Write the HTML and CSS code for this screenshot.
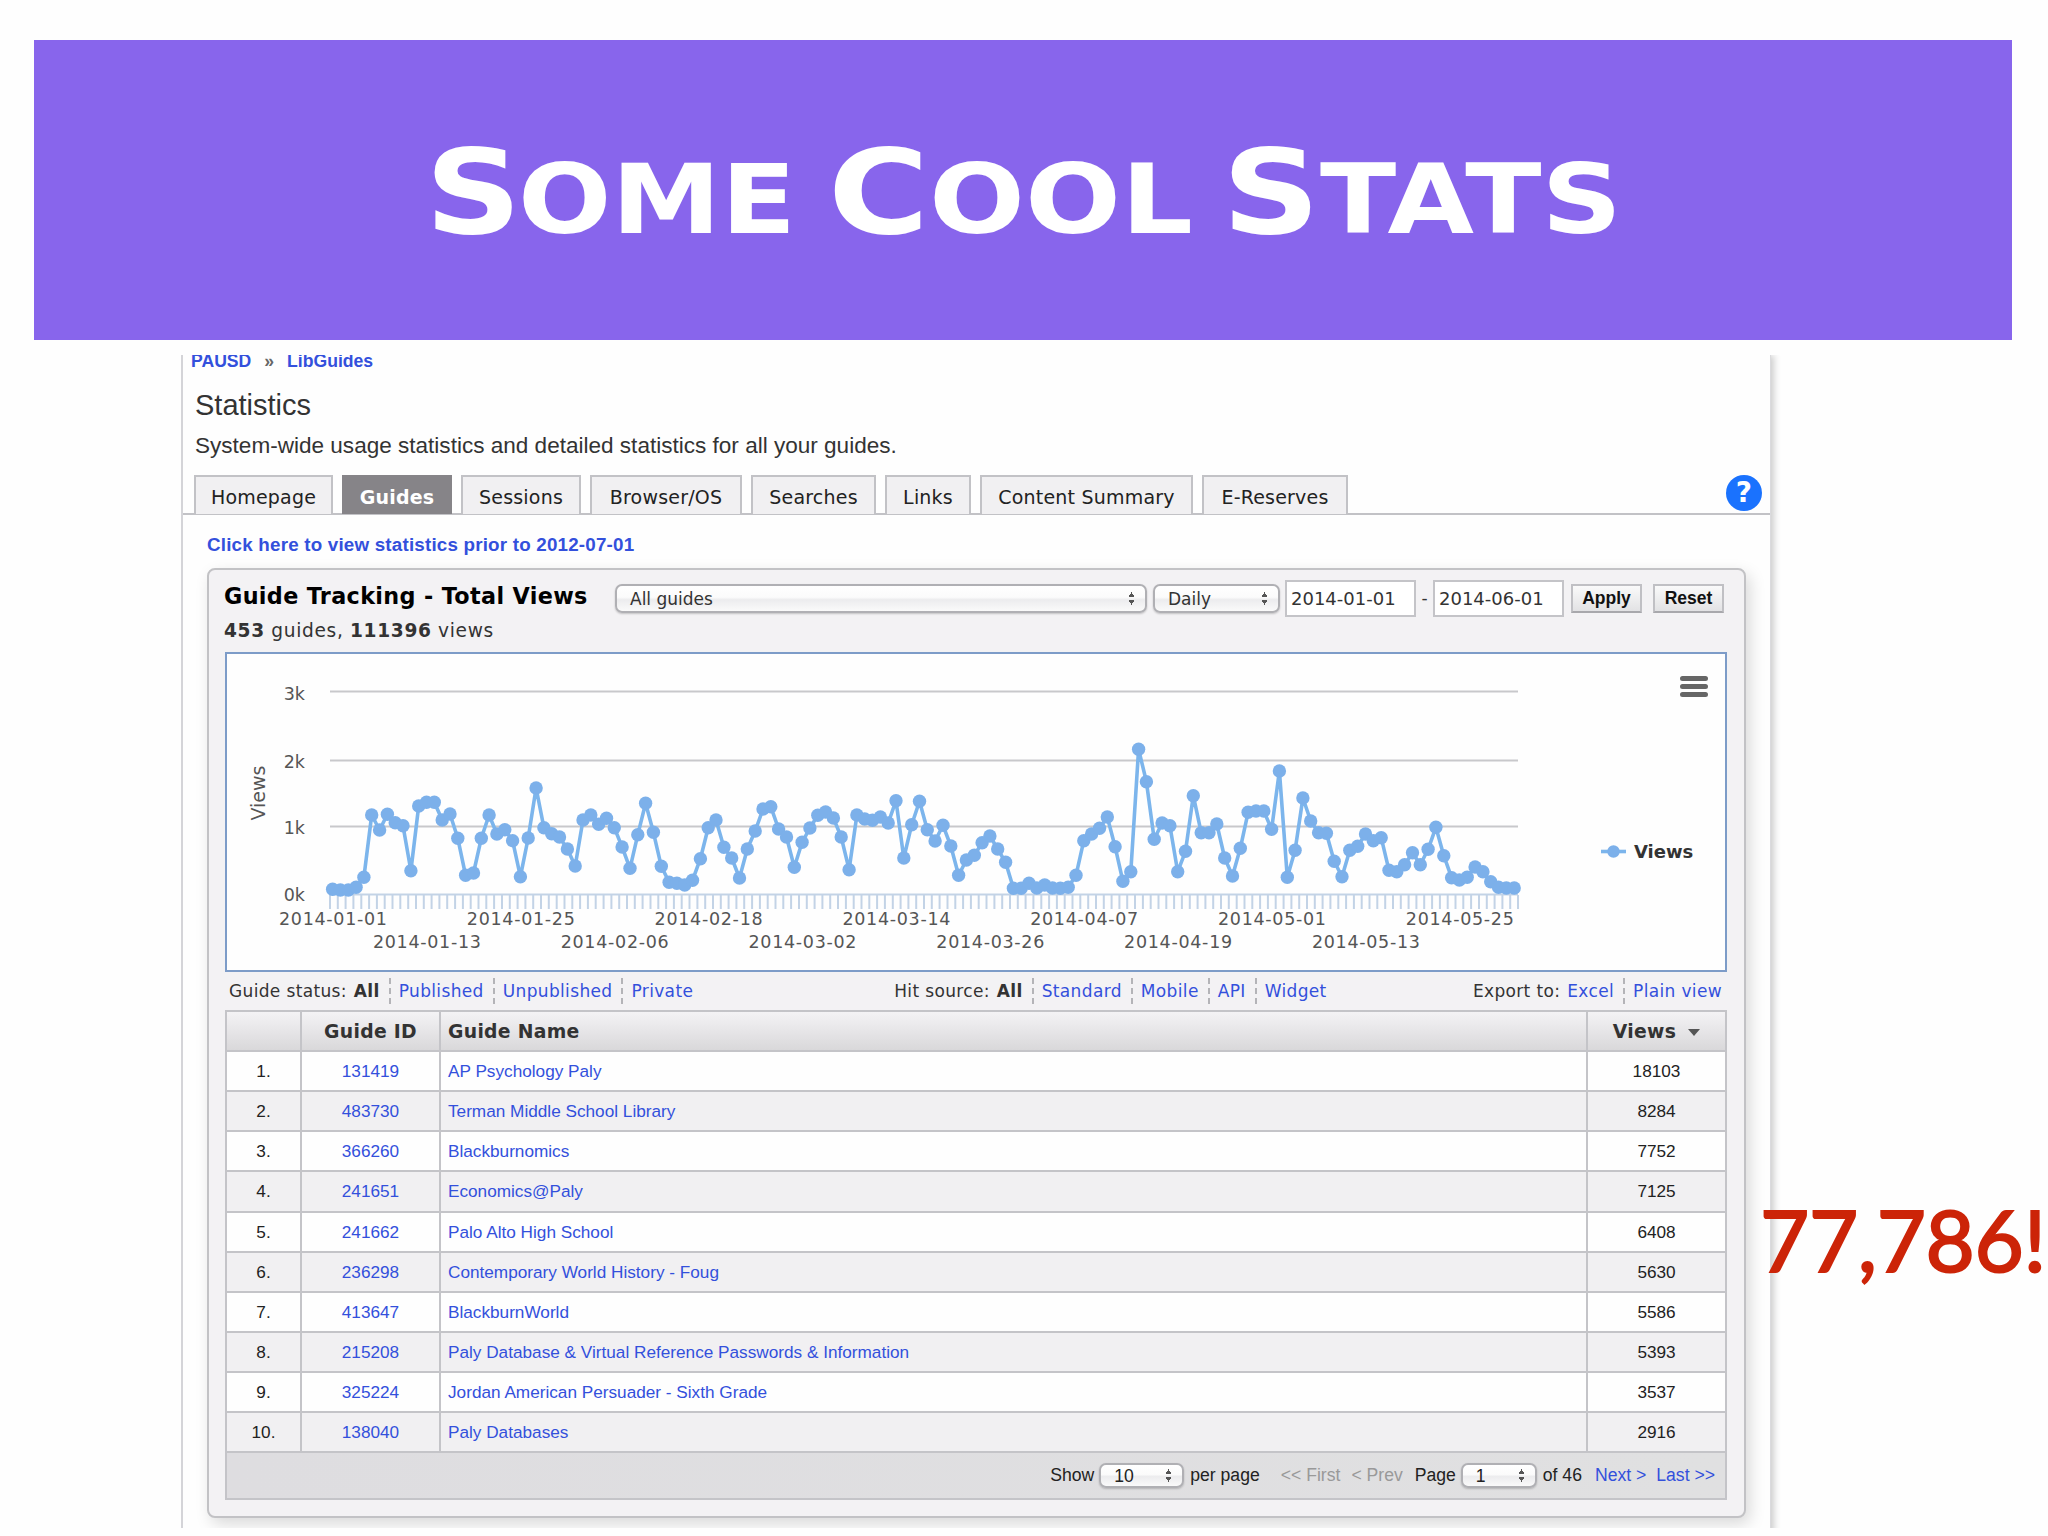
FILE: index.html
```html
<!DOCTYPE html>
<html lang="en">
<head>
  <meta charset="UTF-8">
  <meta name="viewport" content="width=device-width, initial-scale=1.0">
  <title>Some Cool Stats</title>
  <link rel="stylesheet" href="styles.css">
</head>
<body>
  <!-- Title banner -->
  <header class="banner">
    <svg class="banner-title" width="1978" height="300" viewBox="34 40 1978 300">
      <text y="233" textLength="371" x="425" lengthAdjust="spacingAndGlyphs"><tspan class="big">S</tspan><tspan dx="-3">OME</tspan></text>
      <text y="233" textLength="365" x="828" lengthAdjust="spacingAndGlyphs"><tspan class="big">C</tspan>OOL</text>
      <text y="233" textLength="400" x="1222" lengthAdjust="spacingAndGlyphs"><tspan class="big">S</tspan>TATS</text>
    </svg>
  </header>

  <!-- LibGuides window -->
  <div class="window-clip">
    <main class="window">
      <nav class="breadcrumb"><a>PAUSD</a><span>»</span><a>LibGuides</a></nav>
      <h1 class="page-title">Statistics</h1>
      <p class="page-desc">System-wide usage statistics and detailed statistics for all your guides.</p>

      <div class="tabs">
        <a class="tab homepage">Homepage</a>
        <a class="tab active">Guides</a>
        <a class="tab sessions">Sessions</a>
        <a class="tab browser">Browser/OS</a>
        <a class="tab searches">Searches</a>
        <a class="tab links">Links</a>
        <a class="tab content">Content Summary</a>
        <a class="tab reserves">E-Reserves</a>
        <span class="help">?</span>
      </div>

      <a class="prior-link">Click here to view statistics prior to 2012-07-01</a>

      <section class="card">
        <div class="card-head">
          <h2>Guide Tracking - Total Views</h2>
          <div class="select guides">All guides<i class="arrows"></i></div>
          <div class="select daily">Daily<i class="arrows"></i></div>
          <div class="date">2014-01-01</div>
          <span class="dash">-</span>
          <div class="date">2014-06-01</div>
          <div class="btn apply">Apply</div>
          <div class="btn reset">Reset</div>
        </div>
        <p class="totals"><b>453</b> guides, <b>111396</b> views</p>

        <div class="chart">
          <svg width="1498" height="316" viewBox="227 654 1498 316">
            <g class="grid-lines">
              <path d="M330 691.5H1518M330 760.5H1518M330 826.5H1518"/>
            </g>
            <g id="ticks"></g>
            <path class="axis" d="M330 894.5H1518"/>
            <g class="y-labels">
              <text x="305" y="700">3k</text>
              <text x="305" y="768">2k</text>
              <text x="305" y="834">1k</text>
              <text x="305" y="901">0k</text>
            </g>
            <text class="y-title" transform="translate(265 793) rotate(-90)">Views</text>
            <g id="series"></g>
            <g id="x-labels"></g>
            <path class="burger" d="M1682.500 678.500h23M1682.500 686.500h23M1682.500 694.500h23"/>
            <path class="line" d="M1601 851.500h25"/>
            <circle class="dot" cx="1613.500" cy="851.500" r="6.200"/>
            <text class="legend" x="1634" y="857.500">Views</text>
          </svg>
        </div>

        <div class="filters">
          <div class="filter"><span>Guide status:</span><b>All</b><a>Published</a><a>Unpublished</a><a>Private</a></div>
          <div class="filter hits"><span>Hit source:</span><b>All</b><a>Standard</a><a>Mobile</a><a>API</a><a>Widget</a></div>
          <div class="filter export"><span>Export to:</span><a class="first">Excel</a><a>Plain view</a></div>
        </div>

        <div class="table">
          <div class="row head"><span></span><span>Guide ID</span><span>Guide Name</span><span>Views<i class="sort"></i></span></div>
          <div class="row"><span>1.</span><a>131419</a><a>AP Psychology Paly</a><span>18103</span></div>
          <div class="row"><span>2.</span><a>483730</a><a>Terman Middle School Library</a><span>8284</span></div>
          <div class="row"><span>3.</span><a>366260</a><a>Blackburnomics</a><span>7752</span></div>
          <div class="row"><span>4.</span><a>241651</a><a>Economics@Paly</a><span>7125</span></div>
          <div class="row"><span>5.</span><a>241662</a><a>Palo Alto High School</a><span>6408</span></div>
          <div class="row"><span>6.</span><a>236298</a><a>Contemporary World History - Foug</a><span>5630</span></div>
          <div class="row"><span>7.</span><a>413647</a><a>BlackburnWorld</a><span>5586</span></div>
          <div class="row"><span>8.</span><a>215208</a><a>Paly Database &amp; Virtual Reference Passwords &amp; Information</a><span>5393</span></div>
          <div class="row"><span>9.</span><a>325224</a><a>Jordan American Persuader - Sixth Grade</a><span>3537</span></div>
          <div class="row"><span>10.</span><a>138040</a><a>Paly Databases</a><span>2916</span></div>
          <div class="pager">
            <span>Show</span>
            <div class="select per">10<i class="arrows"></i></div>
            <span class="per-page">per page</span>
            <span class="off">&lt;&lt; First</span>
            <span class="off prev">&lt; Prev</span>
            <span class="page">Page</span>
            <div class="select num">1<i class="arrows"></i></div>
            <span>of 46</span>
            <a class="next">Next &gt;</a>
            <a class="last">Last &gt;&gt;</a>
          </div>
        </div>
      </section>
    </main>
  </div>

  <div class="callout">77,786!</div>
  <script src="chart.js"></script>
</body>
</html>
```
FILE: styles.css
```css
* {
  box-sizing: border-box;
}
html, body {
  margin: 0;
  padding: 0;
  width: 2048px;
  height: 1536px;
  overflow: hidden;
  background: #fefefe;
  font-family: "Liberation Sans", Arial, sans-serif;
  color: #333;
}
body {
  position: relative;
  padding-top: 40px;
}
h1, h2, p {
  margin: 0;
  font-weight: normal;
}
a {
  color: #3350dc;
}
/* Banner */
.banner {
  width: 1978px;
  height: 300px;
  margin-left: 34px;
  background: #8865ec;
}
.banner-title {
  display: block;
  fill: #fff;
  font-family: "DejaVu Sans", sans-serif;
  font-weight: bold;
  font-size: 96px;
}
.banner-title .big {
  font-size: 117px;
}
/* Window */
.window-clip {
  width: 1610px;
  height: 1173px;
  margin: 15px 0 0 181px;
  overflow: hidden;
}
.window {
  width: 1590px;
  height: 1200px;
  border-left: 2px solid #d4d4d8;
  border-right: 1px solid #dadadd;
  box-shadow: 3px 0 7px rgba(0, 0, 0, 0.2);
  display: flex;
  flex-direction: column;
  align-items: flex-start;
  padding-left: 1px;
}
.breadcrumb {
  display: flex;
  gap: 13px;
  margin: -4px 0 0 7px;
  font-size: 17.6px;
  font-weight: bold;
  line-height: 20px;
}
.breadcrumb span {
  color: #666;
}
.page-title {
  margin: 17px 0 0 11px;
  font-size: 29px;
  line-height: 34px;
}
.page-desc {
  margin: 10px 0 0 11px;
  font-size: 22.55px;
  line-height: 28px;
}
/* Tabs */
.tabs {
  display: flex;
  gap: 9px;
  width: 1587px;
  height: 40px;
  margin: 15px 0 0 -1px;
  padding-left: 11px;
  border-bottom: 2px solid #c2c2c6;
  font-family: "DejaVu Sans", Verdana, sans-serif;
  font-size: 19px;
  letter-spacing: 0.2px;
}
.tab {
  height: 39px;
  padding-top: 4px;
  border: 2px solid #c2c2c6;
  border-bottom: none;
  background: #f1f0f2;
  color: #222;
  line-height: 33px;
  text-align: center;
  white-space: nowrap;
}
.tab.active {
  width: 110px;
  border-color: #868488;
  background: #868488;
  color: #fff;
  font-weight: bold;
}
.homepage {
  width: 139px;
}
.sessions {
  width: 120px;
}
.browser {
  width: 152px;
}
.searches {
  width: 125px;
}
.links {
  width: 86px;
}
.content {
  width: 213px;
}
.reserves {
  width: 146px;
}
.help {
  width: 36px;
  height: 36px;
  margin: 0 8px 0 auto;
  border-radius: 50%;
  background: #1a72fe;
  color: #fff;
  font-size: 28px;
  font-weight: bold;
  line-height: 36px;
  text-align: center;
}
.prior-link {
  margin: 18px 0 0 23px;
  font-size: 18.8px;
  font-weight: bold;
  letter-spacing: 0.2px;
  line-height: 24px;
}
/* Card */
.card {
  width: 1539px;
  height: 950px;
  margin: 11px 0 0 23px;
  padding: 8px 16px 0 16px;
  border: 2px solid #c2c2c5;
  border-radius: 8px;
  background: #f3f2f4;
  box-shadow: 4px 6px 16px rgba(0, 0, 0, 0.15);
  font-family: "DejaVu Sans", Verdana, sans-serif;
}
.card-head {
  display: flex;
  align-items: center;
  height: 40px;
  font-size: 17px;
}
.card-head h2 {
  width: 390px;
  margin-top: -5px;
  color: #000;
  font-size: 22.3px;
  font-weight: bold;
  letter-spacing: 0.35px;
  white-space: nowrap;
  text-indent: -1px;
}
.select {
  display: flex;
  justify-content: space-between;
  align-items: center;
  height: 29px;
  padding: 2px 10px 0 13px;
  border: 2px solid #b0b0b4;
  border-radius: 7px;
  background: linear-gradient(#fff, #fbfbfb 45%, #ececee 55%, #fafafa);
  box-shadow: 0 1px 2px rgba(0, 0, 0, 0.2);
}
.arrows {
  width: 7px;
  height: 13px;
  margin-top: -2px;
  background:
    conic-gradient(from 149deg at 50% 0, #555 62deg, transparent 0) top / 7px 5px no-repeat,
    conic-gradient(from -31deg at 50% 100%, #555 62deg, transparent 0) bottom / 7px 5px no-repeat;
}
.guides {
  width: 532px;
}
.daily {
  width: 127px;
  margin: 0 5px 0 6px;
}
.date {
  width: 131px;
  height: 37px;
  padding: 1px 0 0 4px;
  border: 2px solid #c4c4c8;
  background: #fff;
  font-size: 18px;
  line-height: 32px;
}
.dash {
  width: 17px;
  text-align: center;
}
.btn {
  width: 71px;
  height: 29px;
  border: 2px solid #c0c0c4;
  border-bottom-color: #a8a8ac;
  background: linear-gradient(#fafafa, #e2e2e4);
  color: #111;
  font-family: "Liberation Sans", Arial, sans-serif;
  font-size: 17.5px;
  font-weight: bold;
  line-height: 25px;
  text-align: center;
}
.apply {
  margin-left: 7px;
}
.reset {
  margin-left: 11px;
}
.totals {
  font-size: 18.6px;
  letter-spacing: 0.65px;
  line-height: 25px;
  text-indent: -1px;
}
/* Chart */
.chart {
  width: 1502px;
  height: 320px;
  margin-top: 9px;
  border: 2px solid #7d9cc8;
  background: #fefefe;
}
.chart svg {
  display: block;
  font-size: 17.5px;
  fill: #555;
}
.grid-lines {
  stroke: #c8c8cb;
  stroke-width: 2.2;
}
.axis, .ticks {
  stroke: #c3d3e6;
  stroke-width: 2;
  fill: none;
}
.y-labels {
  text-anchor: end;
}
.y-title {
  text-anchor: middle;
  font-size: 19px;
}
.line {
  fill: none;
  stroke: #7cb5ec;
  stroke-width: 3.6;
  stroke-linejoin: round;
}
.dot {
  fill: #7cb0ea;
}
.burger {
  stroke: #666;
  stroke-width: 5;
  stroke-linecap: round;
}
.legend {
  fill: #333;
  font-size: 18px;
  font-weight: bold;
}
/* Filters */
.filters {
  display: flex;
  height: 38px;
  padding: 0 6px 0 4px;
  align-items: center;
  font-size: 17px;
  letter-spacing: 0.35px;
}
.filter {
  display: flex;
  line-height: 26px;
}
.filter b {
  margin-left: 7px;
}
.filter a {
  margin-left: 9px;
  padding-left: 8px;
  border-left: 2px dashed #b4b4b8;
}
.filter a.first {
  margin-left: 0;
  padding-left: 7px;
  border: none;
}
.hits {
  margin-left: 201px;
}
.export {
  margin-left: auto;
}
/* Table */
.table {
  width: 1502px;
  border: 2px solid #c4c4c8;
  font-family: "Liberation Sans", Arial, sans-serif;
  font-size: 17.2px;
  color: #222;
}
.row {
  display: grid;
  grid-template-columns: 73px 139px 1147px 1fr;
  height: 40.15px;
  border-bottom: 2px solid #c4c4c8;
  background: #fefefe;
  line-height: 38px;
  text-align: center;
}
.row:nth-child(odd) {
  background: #f1f0f2;
}
.row > * + * {
  border-left: 2px solid #c4c4c8;
}
.row > :nth-child(3) {
  padding-left: 7px;
  text-align: left;
}
.row.head {
  height: 40px;
  background: linear-gradient(#f4f3f5, #d9d8da);
  color: #333;
  font-family: "DejaVu Sans", Verdana, sans-serif;
  font-size: 18.8px;
  font-weight: bold;
  letter-spacing: 0.3px;
  line-height: 39px;
}
.sort {
  display: inline-block;
  margin: 0 0 2px 12px;
  border: 6px solid transparent;
  border-top: 7px solid #555;
  border-bottom: none;
}
.pager {
  display: flex;
  align-items: center;
  justify-content: flex-end;
  height: 45px;
  padding: 0 10px 0 0;
  background: linear-gradient(90deg, #dedde0, #e0e0e1);
  font-size: 17.6px;
  white-space: nowrap;
}
.pager .select {
  height: 25px;
  margin: 0 6px 0 5px;
}
.per {
  width: 85px;
}
.num {
  width: 76px;
}
.per-page {
  margin-right: 21px;
}
.off {
  color: #999;
}
.prev {
  margin: 0 12px 0 11px;
}
.next {
  margin: 0 10px 0 13px;
}
/* Number beside the window */
.callout {
  position: absolute;
  left: 1760px;
  top: 1187px;
  color: #cc2408;
  font-family: Lato, sans-serif;
  font-size: 85px;
  font-weight: normal;
  letter-spacing: -0.4px;
  line-height: 104px;
  white-space: nowrap;
  -webkit-text-stroke: 2px #cc2408;
}
```
FILE: chart.js
```js
// marker heights, one per day from 2014-01-01, in thirds of a pixel
const days = [
  748, 750, 750, 742, 712, 525, 570, 523, 548, 557, 692, 498, 487, 487, 540, 522,
  595, 706, 699, 595, 525, 582, 569, 602, 710, 594, 444, 563, 581, 591, 627, 678,
  540, 525, 553, 535, 563, 621, 685, 584, 490, 577, 679, 727, 730, 735, 721, 656,
  563, 540, 622, 654, 714, 627, 573, 507, 500, 567, 591, 682, 607, 564, 526, 516,
  534, 591, 689, 525, 537, 541, 531, 549, 482, 654, 554, 484, 569, 603, 556, 618,
  706, 660, 646, 608, 588, 627, 667, 745, 745, 730, 744, 735, 744, 745, 742, 706,
  602, 582, 565, 531, 620, 724, 695, 328, 425, 598, 549, 557, 695, 634, 467, 578,
  578, 552, 654, 708, 625, 517, 513, 513, 568, 393, 712, 631, 474, 543, 578, 580,
  664, 710, 631, 619, 582, 602, 593, 691, 695, 674, 638, 674, 628, 562, 647, 713,
  720, 712, 681, 695, 725, 742, 744, 744
];
const labels = [
  '2014-01-01', '2014-01-13', '2014-01-25', '2014-02-06', '2014-02-18',
  '2014-03-02', '2014-03-14', '2014-03-26', '2014-04-07', '2014-04-19',
  '2014-05-01', '2014-05-13', '2014-05-25'
];
const x = i => (332.6 + i * 7.825).toFixed(1);
const y = v => (640 + v / 3).toFixed(1);

let ticks = '';
for (let i = 0; i <= 152; i++) {
  ticks += `M${(330 + i * 7.816).toFixed(1)} 895v14`;
}
document.getElementById('ticks').innerHTML = `<path class="ticks" d="${ticks}"/>`;

document.getElementById('series').innerHTML =
  `<polyline class="line" points="${days.map((v, i) => x(i) + ',' + y(v)).join(' ')}"/>` +
  days.map((v, i) => `<circle class="dot" cx="${x(i)}" cy="${y(v)}" r="6.7"/>`).join('');

// labels alternate between two lines
document.getElementById('x-labels').innerHTML = labels.map((t, k) =>
  `<text x="${279 + k * 93.9}" y="${k % 2 ? 947.5 : 925}" textLength="108">${t}</text>`
).join('');
```
